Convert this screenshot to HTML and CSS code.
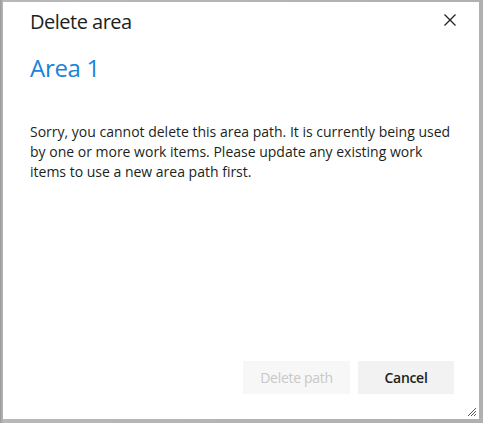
FILE: index.html
```html
<!DOCTYPE html>
<html>
<head>
<meta charset="utf-8">
<link rel="stylesheet" href="styles.css">
</head>
<body>
<div class="frame">
  <div class="dialog">
    <div class="header">
      <div class="title">Delete area</div>
      <button class="close" aria-label="Close">
        <svg width="12" height="12" viewBox="0 0 12 12"><path d="M0.5 0.5 L11.5 11.5 M11.5 0.5 L0.5 11.5" stroke="#222" stroke-width="1.3" fill="none"/></svg>
      </button>
    </div>
    <div class="subtitle">Area 1</div>
    <p class="message">Sorry, you cannot delete this area path. It is currently being used by one or more work items. Please update any existing work items to use a new area path first.</p>
    <div class="footer">
      <button class="btn disabled">Delete path</button>
      <button class="btn cancel">Cancel</button>
    </div>
    <svg class="grip" width="10" height="10" viewBox="0 0 10 10"><path d="M9 1 L1 9 M9 4 L4 9 M9 7 L7 9" stroke="#555" stroke-width="1" fill="none"/></svg>
  </div>
</div>
</body>
</html>
```
FILE: styles.css
```css
html, body { margin: 0; padding: 0; }
body {
  width: 483px;
  height: 423px;
  background: #a6a6a6;
  font-family: "Open Sans", "Noto Sans", sans-serif;
  overflow: hidden;
}
.frame {
  width: 483px;
  height: 423px;
  padding: 2px 4px 4px 3px;
  box-sizing: border-box;
  background: linear-gradient(to right, #9a9a9a, #b8b8b8 3px, #b0b0b0);
}
.dialog {
  position: relative;
  background: #fff;
  height: 100%;
  box-sizing: border-box;
  padding: 0 27px 0 27px;
  display: flex;
  flex-direction: column;
}
.header {
  display: flex;
  justify-content: space-between;
  align-items: center;
  height: 36px;
}
.title {
  font-size: 20px;
  color: #201f1e;
  letter-spacing: -0.5px;
  padding-top: 2px;
}
.close {
  border: 0;
  background: none;
  padding: 0;
  margin-right: -4px;
  margin-top: 0;
  display: flex;
}
.subtitle {
  font-size: 24px;
  color: #1883d7;
  margin-top: 14px;
  letter-spacing: -0.3px;
  line-height: 32px;
}
.message {
  margin: 38px 0 0 0;
  font-size: 14px;
  line-height: 20px;
  color: #201f1e;
  letter-spacing: 0;
}
.footer {
  margin-top: auto;
  margin-bottom: 25px;
  display: flex;
  justify-content: flex-end;
  gap: 8px;
  margin-right: -2px;
}
.btn {
  font-family: inherit;
  font-size: 14px;
  height: 33px;
  border: 0;
  padding: 0 16px;
  letter-spacing: -0.3px;
}
.btn.disabled {
  background: #f7f7f7;
  color: #c8c8c8;
  width: 107px;
}
.btn.cancel {
  background: #f2f2f2;
  color: #201f1e;
  width: 96px;
  font-weight: 600;
}
.grip {
  position: absolute;
  right: 2px;
  bottom: 2px;
}
```
